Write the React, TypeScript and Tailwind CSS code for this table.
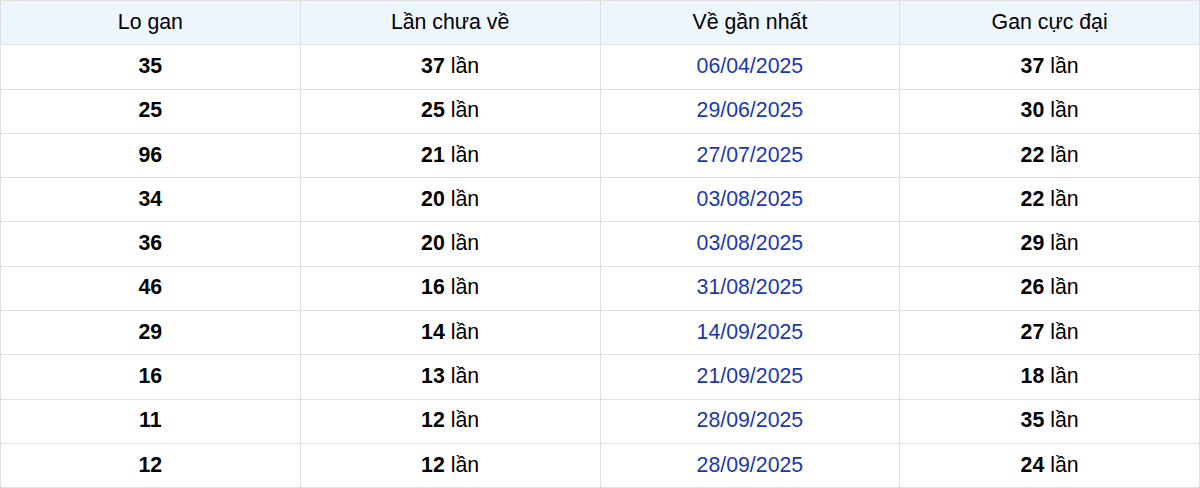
const rows = [
  { lo: "35", chua: 37, ve: "06/04/2025", max: 37 },
  { lo: "25", chua: 25, ve: "29/06/2025", max: 30 },
  { lo: "96", chua: 21, ve: "27/07/2025", max: 22 },
  { lo: "34", chua: 20, ve: "03/08/2025", max: 22 },
  { lo: "36", chua: 20, ve: "03/08/2025", max: 29 },
  { lo: "46", chua: 16, ve: "31/08/2025", max: 26 },
  { lo: "29", chua: 14, ve: "14/09/2025", max: 27 },
  { lo: "16", chua: 13, ve: "21/09/2025", max: 18 },
  { lo: "11", chua: 12, ve: "28/09/2025", max: 35 },
  { lo: "12", chua: 12, ve: "28/09/2025", max: 24 },
]

const cell = "border-[1.5px] border-[#e0e0e0] text-center align-middle p-0"

export default function App() {
  return (
    <div className="w-[1200px] bg-white font-['Liberation_Sans',Arial,sans-serif] text-[21.3px] text-black">
      <table className="w-full table-fixed border-collapse">
        <thead>
          <tr className="bg-[#eef6ff] h-[44.3px]">
            <th className={`${cell} font-normal`}>Lo gan</th>
            <th className={`${cell} font-normal`}>Lần chưa về</th>
            <th className={`${cell} font-normal`}>Về gần nhất</th>
            <th className={`${cell} font-normal`}>Gan cực đại</th>
          </tr>
        </thead>
        <tbody>
          {rows.map((r) => (
            <tr key={r.lo} className="h-[44.3px]">
              <td className={`${cell} font-bold`}>{r.lo}</td>
              <td className={cell}>
                <b>{r.chua}</b> lần
              </td>
              <td className={`${cell} text-[#1a38ad]`}>{r.ve}</td>
              <td className={cell}>
                <b>{r.max}</b> lần
              </td>
            </tr>
          ))}
        </tbody>
      </table>
    </div>
  )
}
